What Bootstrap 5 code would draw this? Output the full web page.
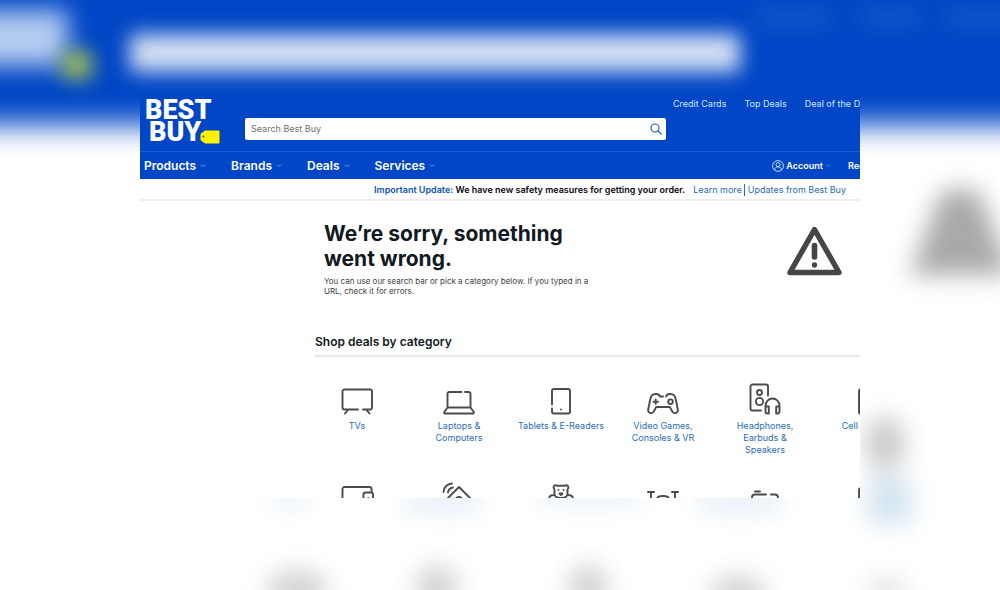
<!DOCTYPE html>
<html lang="en">
<head>
<meta charset="utf-8">
<meta name="viewport" content="width=device-width, initial-scale=1">
<title>Best Buy</title>
<link href="https://cdn.jsdelivr.net/npm/bootstrap@5.3.0/dist/css/bootstrap.min.css" rel="stylesheet">
<style>
  :root { --blue: #0046c6; --link: #2a6cb5; --ink: #101a20; }
  body { font-family: Inter, "Liberation Sans", sans-serif; font-size: 9px; line-height: 12px; color: var(--ink); background: #fff; }
  a { text-decoration: none; color: inherit; }
  .stage { min-height: 100vh; padding-top: 93px; overflow: hidden; }
  .window { width: 72%; aspect-ratio: 16 / 9; white-space: nowrap; }
  .site-header { background: var(--blue); color: #fff; }
  .masthead { height: 58px; }
  .brand-logo { width: 105px; padding: 6px 0 0 5px; font: 900 27px/22px Roboto, sans-serif; }
  .brand-logo:hover { color: #fff; }
  .brand-tag { left: 60px; top: 37px; }
  .top-links { height: 22px; gap: 18px; padding-left: 69.6%; color: #cfe6ff; }
  .search-box { width: 68.5%; height: 22px; margin-top: 3px; background: #fff; border-radius: 2px; padding: 0 4px 0 6px; }
  .search-box input { font-size: 9px; line-height: 12px; color: #333; outline: 0; }
  .search-box input::placeholder { color: #6b7075; opacity: 1; }
  .search-box button { line-height: 0; }
  .main-nav { height: 28px; border-top: 1px solid #1c5cd2; padding-left: 4px; gap: 25px; font-size: 12px; font-weight: 600; }
  .main-nav a { gap: 4px; }
  .account-links { gap: 18px; font-size: 9px; margin-right: -26px; }
  .account-links a { gap: 2px; }
  .notice { height: 22px; border-bottom: 2px solid #eceef0; padding: 1px 14px 0 0; }
  .notice strong { font-weight: 600; color: #05070a; }
  .notice .topic { color: #0a53b5; }
  .notice a { color: var(--link); }
  .notice .rule { border-left: 1px solid var(--link); height: 12px; margin: 0 3px 0 2px; }
  .error-block { padding: 20px 18px 0 184px; }
  .error-block h1 { font-size: 21px; line-height: 25px; font-weight: 700; }
  .error-block p { font-size: 8px; line-height: 10px; color: #3c4347; margin-top: 5px; }
  .shop-title { font-size: 12px; line-height: 16px; font-weight: 600; margin: 38px 0 0 175px; padding-bottom: 5px; border-bottom: 2px solid #e6e8ea; }
  .tiles { grid-template-columns: repeat(6, 102px); margin: 24px 0 0 166px; row-gap: 24px; }
  .tile { color: var(--link); }
  .tile svg { width: 34px; height: 34px; margin-bottom: 5px; }
  .line-art { fill: none; stroke: #4a4b4d; stroke-width: 1.9; stroke-linecap: round; stroke-linejoin: round; }
</style>
</head>
<body>
<div class="stage position-relative d-flex justify-content-center align-items-start">

  <!-- Soft backdrop: an enlarged, out-of-focus version of the page -->
  <svg class="position-absolute top-0 start-0 w-100 h-100" viewBox="0 0 1000 590" preserveAspectRatio="xMidYMin slice" aria-hidden="true">
    <defs>
      <filter id="soft" filterUnits="userSpaceOnUse" x="-100" y="-100" width="1200" height="790" color-interpolation-filters="sRGB"><feGaussianBlur stdDeviation="12"/></filter>
      <filter id="bar" filterUnits="userSpaceOnUse" x="-100" y="-100" width="1200" height="790" color-interpolation-filters="sRGB"><feGaussianBlur stdDeviation="10"/></filter>
      <filter id="edge" filterUnits="userSpaceOnUse" x="-200" y="-200" width="1400" height="890" color-interpolation-filters="sRGB"><feGaussianBlur stdDeviation="15"/></filter>
    </defs>
    <rect x="-80" y="-100" width="1160" height="225" fill="#0046c6" filter="url(#edge)"/>
    <rect x="-30" y="10" width="98" height="56" fill="#b4cdf0" filter="url(#soft)"/>
    <rect x="62" y="51" width="30" height="28" fill="#a0bd55" filter="url(#bar)"/>
    <rect x="130" y="34" width="610" height="38" fill="#d3dff3" filter="url(#bar)"/>
    <g fill="#1458c9" filter="url(#bar)"><rect x="755" y="8" width="75" height="18"/><rect x="860" y="8" width="60" height="18"/><rect x="945" y="8" width="80" height="18"/></g>
    <path d="M942 190H978L1012 275H910Z" fill="#a9a9a9" filter="url(#soft)"/>
    <g filter="url(#soft)">
      <ellipse cx="885" cy="444" rx="20" ry="28" fill="#cacacc"/>
      <rect x="868" y="478" width="44" height="46" fill="#d3e4f0"/>
      <g fill="#e4eef6"><rect x="272" y="492" width="36" height="14"/><rect x="405" y="490" width="74" height="22"/><rect x="540" y="488" width="100" height="16"/><rect x="700" y="490" width="80" height="22"/></g>
      <g fill="#d2d2d4"><ellipse cx="297" cy="590" rx="30" ry="20"/><ellipse cx="437" cy="588" rx="21" ry="23"/><ellipse cx="588" cy="588" rx="20" ry="23"/><ellipse cx="738" cy="594" rx="28" ry="18"/><ellipse cx="887" cy="592" rx="20" ry="14" fill="#e3e3e4"/></g>
    </g>
  </svg>

  <div class="window position-relative overflow-hidden bg-white">
    <header class="site-header">
      <div class="masthead d-flex">
        <a href="#" class="brand-logo position-relative flex-shrink-0">BEST<br><span class="ps-1">BUY</span>
          <svg class="brand-tag position-absolute" width="20" height="14" viewBox="0 0 20 14" aria-hidden="true"><path d="M5 1H19V13H5L1 10V4Z" fill="#fff200" stroke="#fff200" stroke-linejoin="round"/><circle cx="3.5" cy="6.5" r=".9" fill="#3a4a20"/></svg>
        </a>
        <div class="flex-grow-1">
          <div class="top-links d-flex align-items-center">
            <a href="#">Credit Cards</a><a href="#">Top Deals</a><a href="#">Deal of the Day</a>
          </div>
          <form class="search-box d-flex align-items-center" onsubmit="return false">
            <input class="border-0 p-0 flex-grow-1 bg-transparent" type="text" placeholder="Search Best Buy" aria-label="Search Best Buy">
            <button class="border-0 bg-transparent p-0" aria-label="Search"><svg width="12" height="12" viewBox="0 0 12 12" fill="none" stroke="#1f57b0" stroke-width="1.1" stroke-linecap="round"><circle cx="5" cy="5" r="4"/><path d="M8 8l3.2 3.2"/></svg></button>
          </form>
        </div>
      </div>
      <nav class="main-nav d-flex align-items-center">
        <a href="#" class="d-flex align-items-center">Products <svg width="6" height="4" viewBox="0 0 6 4" fill="none" stroke="#3f90ea"><path d="M.5 1Q3 3.5 5.5 1"/></svg></a>
        <a href="#" class="d-flex align-items-center">Brands <svg width="6" height="4" viewBox="0 0 6 4" fill="none" stroke="#3f90ea"><path d="M.5 1Q3 3.5 5.5 1"/></svg></a>
        <a href="#" class="d-flex align-items-center">Deals <svg width="6" height="4" viewBox="0 0 6 4" fill="none" stroke="#3f90ea"><path d="M.5 1Q3 3.5 5.5 1"/></svg></a>
        <a href="#" class="d-flex align-items-center">Services <svg width="6" height="4" viewBox="0 0 6 4" fill="none" stroke="#3f90ea"><path d="M.5 1Q3 3.5 5.5 1"/></svg></a>
        <div class="account-links d-flex align-items-center ms-auto">
          <a href="#" class="d-flex align-items-center"><svg width="12" height="12" viewBox="0 0 12 12" fill="none" stroke="#d5eaff" stroke-width=".9"><circle cx="6" cy="6" r="5.4"/><circle cx="6" cy="4.6" r="2"/><path d="M2.5 10C3 7.7 4.3 6.8 6 6.8S9 7.7 9.5 10"/></svg>Account <svg width="5" height="4" viewBox="0 0 6 4" fill="none" stroke="#3f90ea"><path d="M.5 1Q3 3.5 5.5 1"/></svg></a>
          <a href="#">Recently</a>
        </div>
      </nav>
    </header>

    <div class="notice d-flex align-items-center justify-content-end">
      <strong><span class="topic">Important Update:</span> We have new safety measures for getting your order.</strong>
      <a href="#" class="ms-2">Learn more</a><span class="rule"></span><a href="#">Updates from Best Buy</a>
    </div>

    <main>
      <section class="error-block d-flex justify-content-between align-items-start">
        <div>
          <h1 class="m-0">We’re sorry, something<br>went wrong.</h1>
          <p class="mb-0">You can use our search bar or pick a category below. If you typed in a<br>URL, check it for errors.</p>
        </div>
        <svg class="mt-1" width="55" height="52" viewBox="0 0 55 52" aria-hidden="true"><path d="M27.5 4.500L52 47.500H3Z" fill="none" stroke="#454648" stroke-width="5.400" stroke-linejoin="round"/><path d="M27.500 20.500V32" stroke="#454648" stroke-width="5.600" stroke-linecap="round"/><circle cx="27.500" cy="40" r="2.700" fill="#454648"/></svg>
      </section>

      <h2 class="shop-title">Shop deals by category</h2>

      <div class="tiles d-grid text-center">
        <a href="#" class="tile d-flex flex-column align-items-center"><svg class="line-art" viewBox="0 0 34 34"><path d="M18 28.500H4.500a2 2 0 0 1-2-2V10.500a2 2 0 0 1 2-2H30a2 2 0 0 1 2 2v16a2 2 0 0 1-2 2h-7M8 29l-3 3.500M26.500 29l3 3.500"/></svg>TVs</a>
        <a href="#" class="tile d-flex flex-column align-items-center"><svg class="line-art" viewBox="0 0 34 34"><path d="M19.500 11H7.500a2 2 0 0 0-2 2V26.500H28.500V13a2 2 0 0 0-2-2h-3.500M5.500 26.500L2.200 31a1 1 0 0 0 .8 1.500H31a1 1 0 0 0 .8-1.500L28.500 26.500"/></svg>Laptops &amp;<br>Computers</a>
        <a href="#" class="tile d-flex flex-column align-items-center"><svg class="line-art" viewBox="0 0 34 34"><path d="M8 23.500V10a2 2 0 0 1 2-2H24a2 2 0 0 1 2 2V30.500a2 2 0 0 1-2 2H10a2 2 0 0 1-2-2V27.500M17 28.500v.1"/></svg>Tablets &amp; E-Readers</a>
        <a href="#" class="tile d-flex flex-column align-items-center"><svg class="line-art" viewBox="0 0 34 34"><path d="M20 15.500c.7-2 1.800-2.500 4-2.500 4 0 5 1.500 6 6.500l1.800 9c.6 3.500-3.500 5-5.500 2l-2.500-4.500H10.200l-2.500 4.500c-2 3-6.100 1.500-5.500-2L4 19.500C5 14.500 6 13 10 13c2.300 0 3.400.5 4 2.500h3M9.700 18.500v4.500M7.500 20.700H12"/><circle cx="24.500" cy="20.700" r="2.300"/></svg>Video Games,<br>Consoles &amp; VR</a>
        <a href="#" class="tile d-flex flex-column align-items-center"><svg class="line-art" viewBox="0 0 34 34"><path d="M13 29.500H4.500a2 2 0 0 1-2-2V5.500a2 2 0 0 1 2-2H18a2 2 0 0 1 2 2V14.500"/><circle cx="11.500" cy="11.500" r="2.500"/><circle cx="11.500" cy="20.500" r="3.600"/><path d="M17.500 26V24.500a7 7 0 0 1 14 0V29M17.500 25.500h3.300v7h-1.300a2 2 0 0 1-2-2ZM31.500 25.500h-3.300v7h1.300a2 2 0 0 0 2-2Z"/></svg>Headphones,<br>Earbuds &amp;<br>Speakers</a>
        <a href="#" class="tile d-flex flex-column align-items-center"><svg class="line-art" viewBox="0 0 34 34"><rect x="9" y="8" width="17" height="25" rx="2"/></svg>Cell Phones</a>

        <span class="tile"><svg class="line-art" viewBox="0 0 34 34"><path d="M22 29H4.500a2 2 0 0 1-2-2V9a2 2 0 0 1 2-2H29.500a2 2 0 0 1 2 2v3"/><rect x="23.500" y="12.500" width="9.500" height="18" rx="2"/><path d="M28.200 18v.1"/></svg></span>
        <span class="tile"><svg class="line-art" viewBox="0 0 34 34"><path d="M4 20L17 7 30 20M7 18V32H27V18M1.500 12C2 7 5 4 10 3.500M6 12.500C6.300 9.800 8 8 11 7.500"/><circle cx="17" cy="20" r="3"/></svg></span>
        <span class="tile"><svg class="line-art" viewBox="0 0 34 34"><path d="M10.500 14V9.500C8.500 7 10.500 4 13 5.700h8C23.500 4 25.500 7 23.500 9.500V14c0 3-3 4-6.500 4s-6.500-1-6.500-4ZM10 15c-3 0-5 1-5 4s4 3 6 2M24 15c3 0 5 1 5 4s-4 3-6 2M14.500 10v.1M19.500 10v.1M15.500 13.500h3L17 15Z"/></svg></span>
        <span class="tile"><svg class="line-art" viewBox="0 0 34 34"><path d="M2 12H8M26 12H32M5 12.500v6.500h6M29 12.500v6.500h-6M11 19c0-3 3-3 6-3s6 0 6 3v5H11Z"/></svg></span>
        <span class="tile"><svg class="line-art" viewBox="0 0 34 34"><path d="M7 11.500h5M18 14.500H7a3 3 0 0 0-3 3v10a3 3 0 0 0 3 3H27a3 3 0 0 0 3-3V17.500a3 3 0 0 0-3-3h-4"/></svg></span>
        <span class="tile"><svg class="line-art" viewBox="0 0 34 34"><rect x="9" y="8" width="17" height="25" rx="2"/></svg></span>
      </div>
    </main>
  </div>
</div>
<script src="https://cdn.jsdelivr.net/npm/bootstrap@5.3.0/dist/js/bootstrap.bundle.min.js"></script>
</body>
</html>
